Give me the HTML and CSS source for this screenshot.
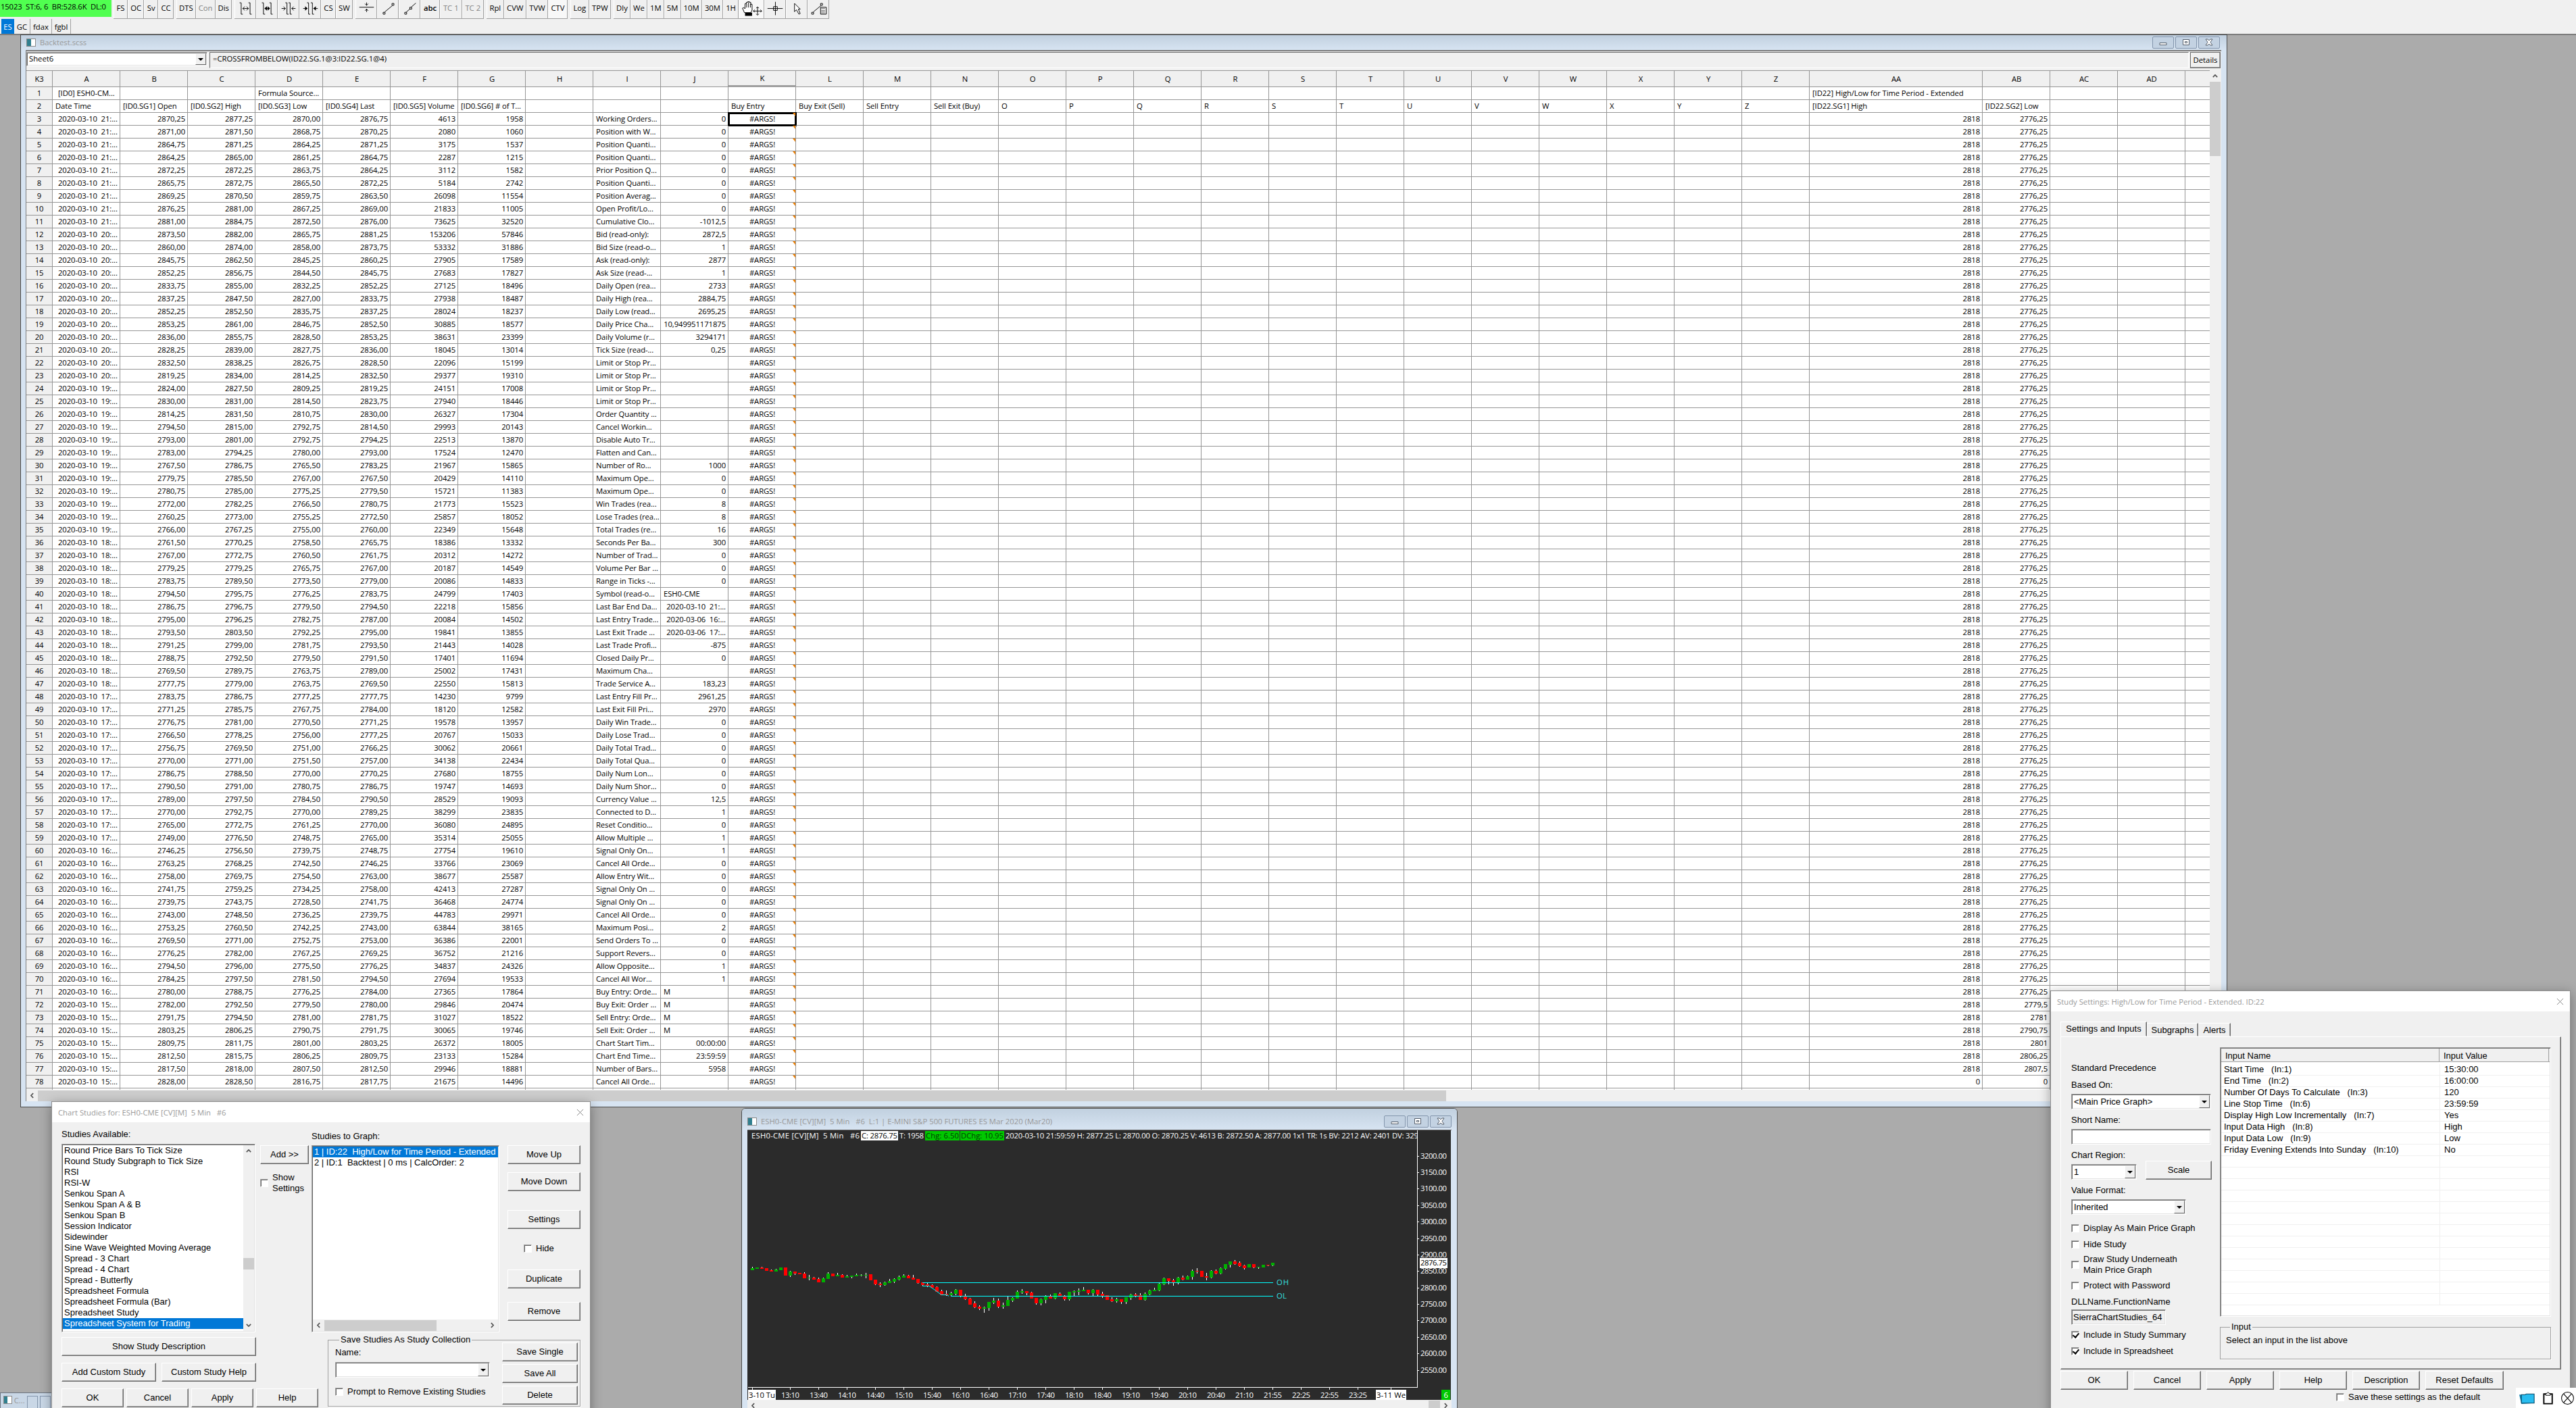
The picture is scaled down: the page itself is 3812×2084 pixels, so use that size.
FILE: index.html
```html
<!DOCTYPE html>
<html>
<head>
    <meta charset="utf-8">
    <title>Sierra Chart</title>
    <link rel="stylesheet" href="styles.css">
</head>
<body>
    <div class="toolbar">
        <div class="status">15023&nbsp; ST:6, 6&nbsp; BR:528.6K&nbsp; DL:0</div>
        <div class="group g1"><span>FS</span><span>OC</span><span>Sv</span><span>CC</span></div>
        <div class="group g2"><span>DTS</span><span class="off">Con</span><span>Dis</span></div>
        <div class="group g3">
            <span class="ico"><svg viewBox="0 0 32 27"><path d="M7 3.500h2.500v18h2.500M21 3.500h2.500v18h2.500M12 12.500h9M15 9.500l-3 3l3 3M18 9.500l3 3l-3 3"/></svg></span>
            <span class="ico"><svg viewBox="0 0 32 27"><path d="M8 3.500h2.500v18h2.500M20 3.500h2.500v18h2.500M13 12.500h7"/><path class="fill" d="M16 9v7l-4-3.500zM17 9v7l4-3.500z"/></svg></span>
            <span class="ico"><svg viewBox="0 0 32 27"><path d="M11 3.500h2.500v18h2.500M16 3.500h2.500v18h2.500M5 12.500h6M8 9.500l3 3l-3 3M21 12.500h6M24 9.500l-3 3l3 3"/></svg></span>
            <span class="ico"><svg viewBox="0 0 32 27"><path d="M11 3.500h2.500v18h2.500M17 3.500h2.500v18h2.500M5 12.500h6M21 12.500h7"/><path class="fill" d="M8 9v7l4-3.500zM25 9v7l-4-3.500z"/></svg></span>
            <span>CS</span><span>SW</span>
        </div>
        <div class="group g4">
            <span class="ico"><svg viewBox="0 0 32 27"><path d="M5 10.500h23M16.500 3v5M14 5l2.500 2.500l2.500-2.500M16.500 18v-5M14 16l2.500-2.500l2.500 2.500"/></svg></span>
            <span class="ico"><svg viewBox="0 0 32 27"><path d="M8.500 18.500h3v3h-3zM22.500 4.500h3v3h-3zM11 18L23 8"/></svg></span>
            <span class="ico"><svg viewBox="0 0 32 27"><path d="M8.500 18.500h3v3h-3zM16.500 10.500h3v3h-3zM11 18l6-5M19 10l7-6"/></svg></span>
            <span class="abc">abc</span><span class="off">TC 1</span><span class="off">TC 2</span>
        </div>
        <div class="group g5"><span>Rpl</span><span>CVW</span><span>TVW</span><span class="on">CTV</span></div>
        <div class="group g6"><span>Log</span><span>TPW</span></div>
        <div class="group g7">
            <span>Dly</span><span>We</span><span>1M</span><span>5M</span><span>10M</span><span>30M</span><span>1H</span>
            <span class="ico hand on"><svg viewBox="0 0 38 27"><path class="white" d="M8 19l-3-7l2-1l2 2V5h2V3h2V2h3v1h2v3h2v9l-2 4z"/><path d="M11.500 5v6M14.500 3v8M17.500 5v6M28.500 10v12M22 16.500h13M26.500 12l2-2l2 2M26.500 21l2 2l2-2M24 14.500l-2 2l2 2M33 14.500l2 2l-2 2"/><path class="fill" d="M9 19h11v5H9z"/></svg></span>
            <span class="ico"><svg viewBox="0 0 32 27"><path d="M4 12.500h24M16.500 2v21M13.500 9.500h6v6h-6z"/></svg></span>
            <span class="ico"><svg viewBox="0 0 32 27"><path class="white" d="M12.500 4.500v13l3-3l4 7l2-1l-3-7h3z"/></svg></span>
            <span class="ico"><svg viewBox="0 0 32 27"><path d="M5.500 18.500h3v3h-3zM19.500 4.500h3v3h-3zM8 18L20 8M19.500 10.500h9v11h-9z"/><path d="M21 12.500h6M21 15.500h6M21 17.500h6M21 19.500h6" stroke-dasharray="1 1"/></svg></span>
        </div>
    </div>
    <div class="tabs"><span class="active">ES</span><span>GC</span><span>fdax</span><span>fgbl</span></div>

    <div class="desktop">
        <!-- spreadsheet -->
        <div class="window sheet-window">
            <div class="caption">
                <i class="app-icon"></i><span class="caption-text">Backtest.scss</span>
                <b class="win-btn"><svg viewBox="0 0 12 12"><path d="M1 6.500h10v3H1z"/></svg></b>
                <b class="win-btn"><svg viewBox="0 0 12 12"><path d="M1.500 1.500h9v8h-9zM4.500 4.500h3v2h-3z"/></svg></b>
                <b class="win-btn"><svg viewBox="0 0 12 12"><path d="M1 1h3l2 2l2-2h3L8 5.500L11 10H8L6 8l-2 2H1l3-4.500z"/></svg></b>
            </div>
            <div class="sheet-client">
                <div class="sheet-bar">
                    <div class="combo sheet-name">Sheet6<i></i></div>
                    <div class="formula">=CROSSFROMBELOW(ID22.SG.1@3:ID22.SG.1@4)</div>
                    <div class="btn details">Details</div>
                </div>
                <div class="sheet-body">
                    <div class="sheet-view"><table id="sheet"></table></div>
                    <div class="vscroll"><svg viewBox="0 0 10 6"><path d="M1 5l4-4l4 4"/></svg><b></b></div>
                </div>
                <div class="hscroll"><svg viewBox="0 0 6 10"><path d="M5 1L1 5l4 4"/></svg><b></b></div>
            </div>
        </div>

        <!-- chart -->
        <div class="window chart-window">
            <div class="caption">
                <i class="app-icon"></i><span class="caption-text">ESH0-CME [CV][M]&nbsp; 5 Min&nbsp;&nbsp; #6&nbsp; L:1 | E-MINI S&amp;P 500 FUTURES ES Mar 2020 (Mar20)</span>
                <b class="win-btn"><svg viewBox="0 0 12 12"><path d="M1 6.500h10v3H1z"/></svg></b>
                <b class="win-btn"><svg viewBox="0 0 12 12"><path d="M1.500 1.500h9v8h-9zM4.500 4.500h3v2h-3z"/></svg></b>
                <b class="win-btn"><svg viewBox="0 0 12 12"><path d="M1 1h3l2 2l2-2h3L8 5.500L11 10H8L6 8l-2 2H1l3-4.500z"/></svg></b>
            </div>
            <div class="chart-client">
                <svg id="chart" viewBox="1106 1673 1041 399"></svg>
                <div class="hscroll"><svg viewBox="0 0 6 10"><path d="M5 1L1 5l4 4"/></svg><b></b><svg viewBox="0 0 6 10"><path d="M1 1l4 4l-4 4"/></svg></div>
            </div>
        </div>

        <!-- minimized window -->
        <div class="mini"><i class="app-icon"></i><span>C...</span><b></b><b></b></div>
    </div>

    <!-- Chart Studies dialog -->
    <div class="dialog studies">
        <div class="dialog-title"><span>Chart Studies for: ESH0-CME [CV][M]&nbsp; 5 Min&nbsp;&nbsp; #6</span><svg class="close" viewBox="0 0 12 12"><path d="M1 1l10 10M11 1L1 11"/></svg></div>
        <div class="studies-top">
            <div class="col-available">
                <label>Studies Available:</label>
                <div class="list available">
                    <ul>
                        <li>Round Price Bars To Tick Size</li>
                        <li>Round Study Subgraph to Tick Size</li>
                        <li>RSI</li>
                        <li>RSI-W</li>
                        <li>Senkou Span A</li>
                        <li>Senkou Span A &amp; B</li>
                        <li>Senkou Span B</li>
                        <li>Session Indicator</li>
                        <li>Sidewinder</li>
                        <li>Sine Wave Weighted Moving Average</li>
                        <li>Spread - 3 Chart</li>
                        <li>Spread - 4 Chart</li>
                        <li>Spread - Butterfly</li>
                        <li>Spreadsheet Formula</li>
                        <li>Spreadsheet Formula (Bar)</li>
                        <li>Spreadsheet Study</li>
                        <li class="selected">Spreadsheet System for Trading</li>
                        <li>Spreadsheet System/Alert</li>
                    </ul>
                    <div class="vscroll"><svg viewBox="0 0 10 6"><path d="M1 5l4-4l4 4"/></svg><b></b><svg viewBox="0 0 10 6"><path d="M1 1l4 4l4-4"/></svg></div>
                </div>
            </div>
            <div class="col-add">
                <div class="btn">Add &gt;&gt;</div>
                <div class="check"><i></i><span>Show<br>Settings</span></div>
            </div>
            <div class="col-graph">
                <label>Studies to Graph:</label>
                <div class="list graph">
                    <ul>
                        <li class="selected">1 | ID:22&nbsp; High/Low for Time Period - Extended</li>
                        <li>2 | ID:1&nbsp; Backtest | 0 ms | CalcOrder: 2</li>
                    </ul>
                    <div class="hscroll"><svg viewBox="0 0 6 10"><path d="M5 1L1 5l4 4"/></svg><b></b><svg viewBox="0 0 6 10"><path d="M1 1l4 4l-4 4"/></svg></div>
                </div>
            </div>
            <div class="col-actions">
                <div class="btn">Move Up</div>
                <div class="btn down">Move Down</div>
                <div class="btn settings">Settings</div>
                <div class="check"><i></i><span>Hide</span></div>
                <div class="btn duplicate">Duplicate</div>
                <div class="btn remove">Remove</div>
            </div>
        </div>
        <div class="studies-bottom">
            <div class="bottom-buttons">
                <div class="btn describe">Show Study Description</div>
                <div class="pair"><div class="btn">Add Custom Study</div><div class="btn">Custom Study Help</div></div>
                <div class="four"><div class="btn">OK</div><div class="btn">Cancel</div><div class="btn">Apply</div><div class="btn">Help</div></div>
            </div>
            <fieldset class="collection">
                <legend>Save Studies As Study Collection</legend>
                <div class="collection-form">
                    <label>Name:</label>
                    <div class="combo"><i></i></div>
                    <div class="check"><i></i><span>Prompt to Remove Existing Studies</span></div>
                </div>
                <div class="collection-buttons"><div class="btn">Save Single</div><div class="btn">Save All</div><div class="btn">Delete</div></div>
            </fieldset>
        </div>
    </div>

    <!-- Study Settings dialog -->
    <div class="dialog study">
        <div class="dialog-title"><span>Study Settings: High/Low for Time Period - Extended. ID:22</span><svg class="close" viewBox="0 0 12 12"><path d="M1 1l10 10M11 1L1 11"/></svg></div>
        <div class="tab-row"><span class="tab active">Settings and Inputs</span><span class="tab sub">Subgraphs</span><span class="tab alerts">Alerts</span></div>
        <div class="panel">
            <div class="options">
                <label>Standard Precedence</label>
                <label class="based">Based On:</label>
                <div class="combo wide">&lt;Main Price Graph&gt;<i></i></div>
                <label>Short Name:</label>
                <div class="field wide"></div>
                <label>Chart Region:</label>
                <div class="region"><div class="combo">1<i></i></div><div class="btn">Scale</div></div>
                <label>Value Format:</label>
                <div class="combo format">Inherited<i></i></div>
                <div class="check"><i></i><span>Display As Main Price Graph</span></div>
                <div class="check hide-study"><i></i><span>Hide Study</span></div>
                <div class="check two"><i></i><span>Draw Study Underneath<br>Main Price Graph</span></div>
                <div class="check"><i></i><span>Protect with Password</span></div>
                <label class="dll">DLLName.FunctionName</label>
                <div class="field dll-name">SierraChartStudies_64</div>
                <div class="check"><i class="ticked"></i><span>Include in Study Summary</span></div>
                <div class="check"><i class="ticked"></i><span>Include in Spreadsheet</span></div>
            </div>
            <div class="inputs">
                <div class="list input-list">
                    <div class="input-head"><span>Input Name</span><span>Input Value</span></div>
                    <div id="inputs"></div>
                </div>
                <fieldset class="input-box"><legend>Input</legend>Select an input in the list above</fieldset>
            </div>
        </div>
        <div class="study-buttons">
            <div class="btn">OK</div><div class="btn">Cancel</div><div class="btn">Apply</div><div class="btn">Help</div><div class="btn">Description</div><div class="btn reset">Reset Defaults</div>
        </div>
        <div class="check save-default"><i></i><span>Save these settings as the default</span></div>
    </div>

    <div class="tray">
        <svg viewBox="0 0 24 20"><path d="M1 5h7l2 2h12v10l-18 1z" fill="#0b7fae"/><path d="M4 5h5l2-1h11v13H4z" fill="#29bdf0" stroke="#0a4a66"/></svg>
        <svg viewBox="0 0 18 22"><path d="M2.500 4.500h13v15h-13z" fill="#fff" stroke="#000" stroke-width="2"/><path d="M5.500 3.500h2l1.500-2l1.500 2h2v3h-7z" fill="#fff" stroke="#000"/></svg>
        <svg viewBox="0 0 20 20"><circle cx="10" cy="10" r="8.500" fill="none" stroke="#000"/><path d="M4.500 4l11 12M15.500 4l-11 12" stroke="#000"/></svg>
    </div>
    <script src="script.js"></script>
</body>
</html>
```

FILE: styles.css
```css
* {
    box-sizing: border-box;
}

html {
    height: 2084px;
    overflow: hidden;
}

body {
    margin: 0;
    width: 3812px;
    height: 2084px;
    overflow: hidden;
    position: relative;
    background: #f0f0f0;
    color: #000;
    font: 11.3px/14px "Open Sans", "Noto Sans", sans-serif;
    white-space: nowrap;
}

/* toolbar */
.toolbar {
    display: flex;
    gap: 4px;
    height: 28px;
    line-height: 23px;
}

.status {
    width: 165px;
    height: 25px;
    margin-right: -1px;
    padding-left: 1px;
    background: #50ff50;
    line-height: 20px;
    letter-spacing: -0.15px;
    white-space: pre;
    overflow: hidden;
}

.group {
    display: flex;
    border-bottom: 1px solid #a0a0a0;
}

.group span {
    flex: 1 1 auto;
    text-align: center;
    border-right: 1px solid #a0a0a0;
    border-left: 1px solid #fff;
}

.group .ico {
    flex: 0 0 32px;
}

.group .hand {
    flex-basis: 38px;
}

.group .off {
    color: #838383;
}

.group .on {
    background: #f8f8f8;
}

.group .abc {
    font-weight: 600;
}

.g1 { width: 89px; }
.g2 { width: 82px; }
.g3 { width: 175px; }
.g4 { width: 190px; }
.g5 { width: 120px; }
.g6 { width: 60px; }
.g7 { width: 319px; }

.ico svg {
    display: block;
    width: 100%;
    height: 27px;
    fill: none;
    stroke: #000;
}

.ico .fill {
    fill: #000;
    stroke: none;
}

.ico .white {
    fill: #fff;
}

.tabs {
    display: flex;
    height: 24px;
    padding-left: 2px;
    line-height: 23px;
    border-bottom: 2px solid #7c7c7c;
}

.tabs span {
    width: 32px;
    text-align: center;
    border-right: 1px solid #a0a0a0;
}

.tabs span:nth-child(2) {
    width: 24px;
}

.tabs span:last-child {
    width: 28px;
}

.tabs .active {
    width: 19px;
    background: #0078d7;
    color: #fff;
    border-right: none;
}

/* MDI area */
.desktop {
    height: 2032px;
    background: #ababab;
}

.window {
    position: absolute;
    display: flex;
    flex-direction: column;
    background: #d7e4f2;
    border: 1px solid #4a4a4a;
}

.sheet-window {
    left: 30px;
    top: 51px;
    width: 3266px;
    height: 1588px;
    padding: 0 8px 8px 7px;
}

.chart-window {
    left: 1097px;
    top: 1640px;
    width: 1060px;
    height: 460px;
    padding: 0 8px;
    border-radius: 6px 6px 0 0;
}

.caption {
    display: flex;
    align-items: center;
    height: 22px;
    margin: 0 -8px 0 -7px;
    padding: 0 10px 0 8px;
    gap: 2px;
    background: linear-gradient(#c1d0df, #d7e4f2);
    color: #999;
}

.chart-window .caption {
    height: 31px;
    margin: 0 -8px;
    padding: 6px 8px 0;
    border-radius: 5px 5px 0 0;
}

.caption-text {
    flex: 1;
    padding-left: 4px;
}

.app-icon {
    width: 14px;
    height: 12px;
    border: 1px solid #8a8a8a;
    background: linear-gradient(90deg, #2f7f8f 50%, #fff 50%);
}

.win-btn {
    width: 32px;
    height: 18px;
    border: 1px solid #8496ad;
    border-radius: 2px;
    background: #c3d2e2;
    text-align: center;
}

.win-btn svg {
    width: 12px;
    height: 12px;
    display: block;
    margin: 2px auto;
    fill: #fff;
    stroke: #555e6b;
}

.sheet-client {
    flex: 1;
    display: flex;
    flex-direction: column;
    background: #f0f0f0;
    border-top: 2px solid #7c7c7c;
    border-left: 1px solid #7c7c7c;
}

.sheet-bar {
    display: flex;
    height: 28px;
    padding-top: 1px;
}

.sheet-name {
    width: 268px;
    height: 21px;
    margin-right: 3px;
}

.formula {
    flex: 1;
    height: 24px;
    padding: 2px 4px;
    border: 1px solid;
    border-color: #696969 #fff #fff #696969;
}

.sheet-bar .details {
    width: 45px;
    height: 24px;
    margin: 0 1px 0 2px;
    line-height: 21px;
    border-color: #696969;
}

.sheet-body {
    display: flex;
    height: 1509px;
}

.sheet-view {
    width: 3231px;
    overflow: hidden;
    background: #fff;
    border-top: 1px solid #969696;
}

#sheet {
    border-collapse: separate;
    border-spacing: 0;
    table-layout: fixed;
    width: 3295px;
}

#sheet td {
    height: 19px;
    padding: 0 3px 0 4px;
    border-right: 1px solid #969696;
    border-bottom: 1px solid #969696;
    line-height: 18px;
    overflow: hidden;
    position: relative;
    letter-spacing: -0.1px;
}

#sheet .num {
    text-align: right;
}

#sheet .date {
    padding-left: 8px;
}

#sheet .head td {
    height: 24px;
    background: #f0f0f0;
    text-align: center;
}

#sheet td:first-child {
    background: #f0f0f0;
    text-align: center;
    padding: 0;
}

#sheet .head .current {
    border-bottom: 3px solid #a0a0a0;
}

#sheet .args {
    text-align: center;
}

/* comment marker in the cell corner */
#sheet .args::after {
    content: "";
    position: absolute;
    top: 0;
    right: 0;
    border-top: 5px solid #f08000;
    border-left: 4px solid transparent;
}

#sheet .cursor {
    outline: 3px solid #000;
    outline-offset: -2px;
}

/* scrollbars */
.vscroll {
    width: 16px;
    display: flex;
    flex-direction: column;
    align-items: center;
    background: #f0f0f0;
}

.vscroll svg {
    width: 8px;
    height: 5px;
    margin: 6px 0;
    fill: none;
    stroke: #505050;
    stroke-width: 2;
}

.vscroll b {
    width: 16px;
    height: 110px;
    background: #cdcdcd;
}

.hscroll {
    height: 17px;
    display: flex;
    align-items: center;
    background: #f0f0f0;
}

.hscroll svg {
    width: 5px;
    height: 9px;
    margin: 0 6px;
    fill: none;
    stroke: #505050;
    stroke-width: 2;
}

.hscroll b {
    height: 16px;
    background: #cdcdcd;
}

.sheet-client .hscroll b {
    width: 2084px;
}

/* chart window */
.chart-client {
    flex: 1;
    border-top: 1px solid #696969;
}

#chart {
    display: block;
    width: 1041px;
    height: 399px;
    background: #2b2b2b;
    fill: #fff;
}

.chart-client .hscroll b {
    width: 17px;
    margin-left: auto;
}

.mini {
    position: absolute;
    left: 0;
    top: 2061px;
    width: 80px;
    height: 30px;
    display: flex;
    padding: 4px;
    gap: 3px;
    background: #c9d7e6;
    border: 1px solid #6b7480;
    color: #999;
}

.mini b {
    width: 18px;
    border: 1px solid #8496ad;
}

/* dialogs */
.dialog {
    position: absolute;
    background: #f0f0f0;
    border: 1px solid #8e8e8e;
    box-shadow: 0 4px 16px rgba(0, 0, 0, 0.35);
    font: 13px/16px "Liberation Sans", Arial, sans-serif;
}

.dialog-title {
    display: flex;
    justify-content: space-between;
    align-items: center;
    height: 30px;
    padding: 0 9px;
    background: #fff;
    color: #999;
    font: 11.3px "Open Sans", "Noto Sans", sans-serif;
}

.close {
    width: 11px;
    height: 11px;
    stroke: #808080;
}

.dialog label {
    display: block;
    height: 16px;
}

.btn {
    height: 28px;
    line-height: 25px;
    text-align: center;
    background: #f0f0f0;
    border: 1px solid;
    border-color: #fff #696969 #696969 #fff;
    box-shadow: inset -1px -1px #a0a0a0;
}

.combo,
.field,
.list {
    background: #fff;
    border: 1px solid;
    border-color: #a0a0a0 #fff #fff #a0a0a0;
    box-shadow: inset 1px 1px #696969, inset -1px -1px #e3e3e3;
}

.combo,
.field {
    height: 23px;
    padding-left: 3px;
    line-height: 21px;
}

.combo {
    display: flex;
    justify-content: space-between;
}

.combo.sheet-name {
    height: 21px;
    line-height: 18px;
}

.combo i {
    width: 16px;
    margin: 1px 1px 1px auto;
    background: #f0f0f0;
    border: 1px solid;
    border-color: #fff #696969 #696969 #fff;
    display: flex;
    align-items: center;
    justify-content: center;
}

.combo i::after {
    content: "";
    border: 4px solid transparent;
    border-top-color: #000;
    border-bottom: none;
}

.check {
    display: flex;
    align-items: center;
    gap: 6px;
}

.check i {
    width: 12px;
    height: 12px;
    background: #fff;
    border: 1px solid;
    border-color: #a0a0a0 #fff #fff #a0a0a0;
    box-shadow: inset 1px 1px #696969;
}

.check .ticked::after {
    content: "";
    display: block;
    width: 4px;
    height: 7px;
    margin: 0 0 0 3px;
    border: solid #000;
    border-width: 0 2px 2px 0;
    transform: rotate(40deg);
}

.list ul {
    list-style: none;
    margin: 0;
    padding: 0;
    overflow: hidden;
    flex: 1;
}

.list li {
    height: 16px;
    padding-left: 2px;
}

.list .selected {
    background: #0078d7;
    color: #fff;
}

fieldset {
    margin: 0;
    padding: 0;
    border: 1px solid #a0a0a0;
    box-shadow: 1px 1px #fff;
}

legend {
    margin-left: 6px;
    padding: 0 2px;
}

/* Chart Studies */
.studies {
    left: 76px;
    top: 1630px;
    width: 798px;
    height: 480px;
}

.studies-top {
    display: flex;
    height: 318px;
    padding-left: 14px;
}

.col-available {
    width: 287px;
    margin-right: 7px;
    padding-top: 10px;
}

.available {
    display: flex;
    height: 279px;
    margin-top: 6px;
    padding: 1px;
}

.available .vscroll b {
    height: 17px;
    margin-top: 150px;
}

.available .vscroll svg:last-child {
    margin-top: auto;
}

.col-add {
    width: 72px;
    margin-right: 4px;
    padding-top: 34px;
}

.col-add .check {
    margin-top: 12px;
}

.col-graph {
    width: 278px;
    margin-right: 12px;
    padding-top: 13px;
}

.graph {
    display: flex;
    flex-direction: column;
    height: 277px;
    margin-top: 5px;
    padding: 1px;
}

.graph .hscroll b {
    width: 166px;
    margin-right: auto;
}

.col-actions {
    width: 108px;
    padding-top: 34px;
}

.down { margin-top: 12px; }
.settings { margin-top: 28px; }
.col-actions .check { margin: 21px 0 0 24px; }
.duplicate { margin-top: 23px; }
.remove { margin-top: 20px; }

.studies-bottom {
    display: flex;
    padding-left: 14px;
}

.bottom-buttons {
    width: 394px;
}

.describe {
    width: 288px;
}

.pair {
    display: flex;
    gap: 8px;
    width: 288px;
    margin: 10px 0;
}

.four {
    display: flex;
    gap: 4px;
    width: 380px;
}

.pair .btn,
.four .btn {
    flex: 1;
}

.collection {
    display: flex;
    justify-content: space-between;
    width: 374px;
    height: 107px;
    margin-top: -4px;
    padding: 0 3px 0 10px;
}

.collection-form {
    width: 229px;
    padding-top: 3px;
}

.collection .combo {
    margin: 6px 0 13px;
}

.collection-buttons {
    width: 112px;
    margin-top: -4px;
}

.collection-buttons .btn {
    margin-bottom: 4px;
}

/* Study Settings */
.study {
    left: 3034px;
    top: 1466px;
    width: 770px;
    height: 640px;
}

.tab-row {
    display: flex;
    align-items: flex-end;
    height: 37px;
    padding-left: 14px;
}

.tab {
    height: 20px;
    line-height: 20px;
    text-align: center;
    border: 1px solid;
    border-color: #fff #696969 transparent #fff;
    box-shadow: inset -1px 0 #a0a0a0;
}

.tab.active {
    width: 128px;
    height: 22px;
    line-height: 19px;
}

.tab.sub { width: 76px; }
.tab.alerts { width: 48px; }

.panel {
    display: flex;
    width: 741px;
    height: 493px;
    margin-left: 14px;
    border: 1px solid;
    border-color: #fff #696969 #696969 #fff;
    box-shadow: inset -1px -1px #a0a0a0;
}

.options {
    width: 235px;
    padding: 38px 0 0 15px;
}

.options .based {
    margin: 9px 0 5px;
}

.options .wide {
    width: 207px;
    margin-bottom: 8px;
}

.options .wide + label {
    margin-bottom: 5px;
}

.options .region {
    display: flex;
    align-items: flex-end;
    gap: 13px;
    margin: -5px 0 8px;
}

.region .combo { width: 97px; }
.region .btn { width: 98px; }

.format {
    width: 170px;
    margin: 5px 0 12px;
}

.options .check {
    margin-bottom: 8px;
}

.options .hide-study {
    margin-bottom: 6px;
}

.options .two {
    margin-bottom: 7px;
}

.options .dll-name {
    width: 140px;
    margin: 3px 0 7px;
    background: #f0f0f0;
    padding-left: 2px;
}

.input-list {
    width: 490px;
    height: 399px;
    margin-top: 15px;
    padding: 1px;
}

.input-head {
    display: flex;
    height: 20px;
    background: #f0f0f0;
    line-height: 22px;
    border-bottom: 1px solid #a0a0a0;
    margin-bottom: 3px;
}

.input-head span {
    width: 323px;
    padding-left: 6px;
    border-right: 1px solid #a0a0a0;
}

.input-head span:last-child {
    width: 162px;
}

.input-row {
    display: flex;
    height: 17px;
    border-bottom: 1px solid #f0f0f0;
    white-space: pre;
}

.input-row span:first-child {
    width: 324px;
    padding-left: 4px;
    border-right: 1px solid #f0f0f0;
}

.input-row span:last-child {
    padding-left: 6px;
}

.input-box {
    height: 56px;
    margin-top: 7px;
    padding: 4px 0 0 8px;
}

.study-buttons {
    display: flex;
    gap: 8px;
    margin: 2px 0 3px 14px;
}

.study-buttons .btn {
    width: 100px;
}

.study-buttons .reset {
    width: 116px;
}

.save-default {
    margin-left: 422px;
}

.tray {
    position: absolute;
    left: 3723px;
    top: 2054px;
    width: 89px;
    height: 30px;
    display: flex;
    align-items: center;
    gap: 10px;
    padding-left: 4px;
    background: #fff;
}

.tray svg {
    height: 21px;
    flex: none;
}
```

FILE: script.js
```javascript
// open high low last volume trades, newest bar first
const bars = `2870,25 2877,25 2870,00 2876,75 4613 1958
2871,00 2871,50 2868,75 2870,25 2080 1060
2864,75 2871,25 2864,25 2871,25 3175 1537
2864,25 2865,00 2861,25 2864,75 2287 1215
2872,25 2872,25 2863,75 2864,25 3112 1582
2865,75 2872,75 2865,50 2872,25 5184 2742
2869,25 2870,50 2859,75 2863,50 26098 11554
2876,25 2881,00 2867,25 2869,00 21833 11005
2881,00 2884,75 2872,50 2876,00 73625 32520
2873,50 2882,00 2865,75 2881,25 153206 57846
2860,00 2874,00 2858,00 2873,75 53332 31886
2845,75 2862,50 2845,25 2860,25 27905 17589
2852,25 2856,75 2844,50 2845,75 27683 17827
2833,75 2855,00 2832,25 2852,25 27125 18496
2837,25 2847,50 2827,00 2833,75 27938 18487
2852,25 2852,50 2835,75 2837,25 28024 18237
2853,25 2861,00 2846,75 2852,50 30885 18577
2836,00 2855,75 2828,50 2853,25 38631 23399
2828,25 2839,00 2827,75 2836,00 18045 13014
2832,50 2838,25 2826,75 2828,50 22096 15199
2819,25 2834,00 2814,25 2832,50 29377 19310
2824,00 2827,50 2809,25 2819,25 24151 17008
2830,00 2831,00 2814,50 2823,75 27940 18446
2814,25 2831,50 2810,75 2830,00 26327 17304
2794,50 2815,00 2792,75 2814,50 29993 20143
2793,00 2801,00 2792,75 2794,25 22513 13870
2783,00 2794,25 2780,00 2793,00 17524 12470
2767,50 2786,75 2765,50 2783,25 21967 15865
2779,75 2785,50 2767,00 2767,50 20429 14110
2780,75 2785,00 2775,25 2779,50 15721 11383
2772,00 2782,25 2766,50 2780,75 21773 15523
2760,25 2773,00 2755,25 2772,50 25857 18052
2766,00 2767,25 2755,00 2760,00 22349 15648
2761,50 2770,25 2758,50 2765,75 18386 13332
2767,00 2772,75 2760,50 2761,75 20312 14272
2779,25 2779,25 2765,75 2767,00 20187 14549
2783,75 2789,50 2773,50 2779,00 20086 14833
2794,50 2795,75 2776,25 2783,75 24799 17403
2786,75 2796,75 2779,50 2794,50 22218 15856
2795,00 2796,25 2782,75 2787,00 20084 14502
2793,50 2803,50 2792,25 2795,00 19841 13855
2791,25 2799,00 2781,75 2793,50 21443 14028
2788,75 2792,50 2779,50 2791,50 17401 11694
2769,50 2789,75 2763,75 2789,00 25002 17431
2777,75 2779,00 2763,75 2769,50 22550 15813
2783,75 2786,75 2777,25 2777,75 14230 9799
2771,25 2785,75 2767,75 2784,00 18120 12582
2776,75 2781,00 2770,50 2771,25 19578 13957
2766,50 2778,25 2756,00 2777,25 20767 15033
2756,75 2769,50 2751,00 2766,25 30062 20661
2770,00 2771,00 2751,50 2757,00 34138 22434
2786,75 2788,50 2770,00 2770,25 27680 18755
2790,50 2791,00 2780,75 2786,75 19747 14693
2789,00 2797,50 2784,50 2790,50 28529 19093
2770,00 2792,75 2770,00 2789,25 38299 23835
2765,00 2772,75 2761,25 2770,00 36080 24895
2749,00 2776,50 2748,75 2765,00 35314 25055
2746,25 2756,50 2739,75 2748,75 27754 19610
2763,25 2768,25 2742,50 2746,25 33766 23069
2758,00 2769,75 2754,50 2763,00 38677 25587
2741,75 2759,25 2734,25 2758,00 42413 27287
2739,75 2743,75 2728,50 2741,75 36468 24774
2743,00 2748,50 2736,25 2739,75 44783 29971
2753,25 2760,50 2742,25 2743,00 63844 38165
2769,50 2771,00 2752,75 2753,00 36386 22001
2776,25 2782,00 2767,25 2769,25 36752 21216
2794,50 2796,00 2775,50 2776,25 34837 24326
2784,25 2797,50 2781,50 2794,50 27694 19533
2780,00 2788,75 2776,25 2784,00 27365 17864
2782,00 2792,50 2779,50 2780,00 29846 20474
2791,75 2794,50 2781,00 2781,75 31027 18522
2803,25 2806,25 2790,75 2791,75 30065 19746
2809,75 2811,75 2801,00 2803,25 26372 18005
2812,50 2815,75 2806,25 2809,75 23133 15284
2817,50 2818,00 2807,50 2812,50 29946 18881
2828,00 2828,50 2816,75 2817,75 21675 14496`.split('\n').map(l => l.split(' '));

// columns I and J
const info = `Working Orders...|0
Position with W...|0
Position Quanti...|0
Position Quanti...|0
Prior Position Q...|0
Position Quanti...|0
Position Averag...|0
Open Profit/Lo...|0
Cumulative Clo...|-1012,5
Bid (read-only):|2872,5
Bid Size (read-o...|1
Ask (read-only):|2877
Ask Size (read-...|1
Daily Open (rea...|2733
Daily High (rea...|2884,75
Daily Low (read...|2695,25
Daily Price Cha...|10,949951171875
Daily Volume (r...|3294171
Tick Size (read-...|0,25
Limit or Stop Pr...|
Limit or Stop Pr...|
Limit or Stop Pr...|
Limit or Stop Pr...|
Order Quantity ...|
Cancel Workin...|
Disable Auto Tr...|
Flatten and Can...|
Number of Ro...|1000
Maximum Ope...|0
Maximum Ope...|0
Win Trades (rea...|8
Lose Trades (rea...|8
Total Trades (re...|16
Seconds Per Ba...|300
Number of Trad...|0
Volume Per Bar ...|0
Range in Ticks -...|0
Symbol (read-o...|ESH0-CME
Last Bar End Da...|2020-03-10  21:...
Last Entry Trade...|2020-03-06  16:...
Last Exit Trade ...|2020-03-06  17:...
Last Trade Profi...|-875
Closed Daily Pr...|0
Maximum Cha...|
Trade Service A...|183,23
Last Entry Fill Pr...|2961,25
Last Exit Fill Pri...|2970
Daily Win Trade...|0
Daily Lose Trad...|0
Daily Total Trad...|0
Daily Total Qua...|0
Daily Num Lon...|0
Daily Num Shor...|0
Currency Value ...|12,5
Connected to D...|1
Reset Conditio...|0
Allow Multiple ...|1
Signal Only On...|1
Cancel All Orde...|0
Allow Entry Wit...|0
Signal Only On ...|0
Signal Only On ...|0
Cancel All Orde...|0
Maximum Posi...|2
Send Orders To ...|0
Support Revers...|0
Allow Opposite...|1
Cancel All Wor...|1
Buy Entry: Orde...|M
Buy Exit: Order ...|M
Sell Entry: Orde...|M
Sell Exit: Order ...|M
Chart Start Tim...|00:00:00
Chart End Time...|23:59:59
Number of Bars...|5958
Cancel All Orde...|`.split('\n').map(l => l.split('|'));

const lows = { 72: '2779,5', 73: '2781', 74: '2790,75', 75: '2801', 76: '2806,25', 77: '2807,5', 78: '0' };

function hourOf(row) {
    if (row < 12) return 21;
    return 20 - Math.floor((row - 12) / 12);
}

function cell(text, cls) {
    return '<td class="' + (cls || '') + '">' + (text || '').replace(/ {2}/g, ' &nbsp;') + '</td>';
}

function buildSheet() {
    const letters = [];
    for (let i = 0; i < 31; i++) {
        letters.push(i < 26 ? String.fromCharCode(65 + i) : 'A' + String.fromCharCode(39 + i));
    }
    let html = '<colgroup><col style="width:39px">';
    letters.forEach(l => { html += '<col style="width:' + (l === 'AA' ? 256 : 100) + 'px">'; });
    html += '</colgroup><tr class="head">' + cell('K3');
    letters.forEach(l => { html += cell(l === 'AE' ? '' : l, l === 'K' ? 'current' : ''); });
    html += '</tr>';

    const titles = {
        1: { A: '[ID0] ESH0-CM...', D: 'Formula Source...', AA: '[ID22] High/Low for Time Period - Extended' },
        2: {
            A: 'Date Time', B: '[ID0.SG1] Open', C: '[ID0.SG2] High', D: '[ID0.SG3] Low', E: '[ID0.SG4] Last',
            F: '[ID0.SG5] Volume', G: '[ID0.SG6] # of T...', K: 'Buy Entry', L: 'Buy Exit (Sell)', M: 'Sell Entry',
            N: 'Sell Exit (Buy)', O: 'O', P: 'P', Q: 'Q', R: 'R', S: 'S', T: 'T', U: 'U', V: 'V', W: 'W', X: 'X',
            Y: 'Y', Z: 'Z', AA: '[ID22.SG1] High', AB: '[ID22.SG2] Low'
        }
    };

    for (let row = 1; row <= 79; row++) {
        html += '<tr>' + cell(row < 79 ? String(row) : '');
        letters.forEach((l, i) => {
            if (row === 79) { html += cell(); return; }
            if (row < 3) { html += cell(titles[row][l], row === 1 && l === 'A' ? 'date' : ''); return; }
            const n = row - 3;
            if (l === 'A') html += cell('2020-03-10  ' + hourOf(row) + ':...', 'date');
            else if (i < 7) html += cell(bars[n][i - 1], 'num');
            else if (l === 'I') html += cell(info[n][0]);
            else if (l === 'J') html += cell(info[n][1], /^(M|ESH)/.test(info[n][1]) ? '' : 'num');
            else if (l === 'K') html += cell('#ARGS!', row === 3 ? 'args cursor' : 'args');
            else if (l === 'AA') html += cell(row === 78 ? '0' : '2818', 'num');
            else if (l === 'AB') html += cell(lows[row] || '2776,25', 'num');
            else html += cell();
        });
        html += '</tr>';
    }
    document.getElementById('sheet').innerHTML = html;
}

// bars older than the sheet: color, body top, body bottom, wick top, wick bottom (thirds of a pixel below 1820)
const older = `g 171 180 165 180,g 168 174 168 174,r 168 174 165 174,r 171 183 171 183,r 180 186 177 186,g 177 186 174 186,
g 168 180 168 180,r 168 204 168 204,g 186 204 183 210,r 186 195 186 201,r 192 198 192 198,r 195 216 189 216,g 213 216 201 225,
r 213 222 210 222,r 219 234 213 234,g 216 234 213 234,g 195 219 189 219,r 195 207 195 207,g 201 207 192 207,r 201 213 198 213,
g 207 213 201 213,g 204 210 204 216,g 201 207 195 207,g 201 204 198 207,g 201 204 192 216,r 198 225 198 225,r 222 243 222 246,
r 240 246 234 255,g 234 246 231 249,g 228 237 219 237,g 219 231 216 237,g 210 222 204 225,g 204 213 198 213,r 204 216 201 216,
r 213 222 201 222`.split(',').map(s => s.trim().split(' '));

function priceY(p) {
    return Math.round(1711.6 + (3200 - p) * 317 / 650);
}

function buildChart() {
    let s = '';
    const text = (x, y, t, w, fill, anchor) => {
        s += '<text x="' + x + '" y="' + y + '" font-size="11.3" xml:space="preserve"' + (w ? ' textLength="' + w + '"' : '') +
            (fill ? ' fill="' + fill + '"' : '') + (anchor ? ' text-anchor="' + anchor + '"' : '') + '>' + t + '</text>';
    };
    const rect = (x, y, w, h, fill) => {
        s += '<rect x="' + x + '" y="' + y + '" width="' + w + '" height="' + h + '" fill="' + fill + '"/>';
    };
    const candle = (x, color, top, bottom, high, low) => {
        rect(x, high, 1, low - high, '#fff');
        rect(x - 2, top, 5, Math.max(1, bottom - top), color);
    };

    older.forEach((b, i) => {
        const v = b.slice(1).map(n => 1820 + n / 3);
        candle(1883 - 7 * (110 - i), b[0] === 'g' ? '#00b000' : '#f00', v[0], v[1], v[2], v[3]);
    });
    bars.forEach((b, i) => {
        const v = b.slice(0, 4).map(n => parseFloat(n.replace(',', '.')));
        candle(1883 - 7 * i, v[3] >= v[0] ? '#00b000' : '#f00',
            priceY(Math.max(v[0], v[3])), priceY(Math.min(v[0], v[3])) + 1, priceY(v[1]), priceY(v[2]) + 1);
    });

    // opening range
    s += '<path d="M1365 1898.5H1884M1365 1903.5h10l6 4l12 9h8l3 2M1407 1918.5H1884" fill="none" stroke="#00ffff"/>';
    text(1889, 1902, 'OH', 18, '#35e0e0');
    text(1889, 1922, 'OL', 15, '#35e0e0');

    // header
    text(1112, 1685, 'ESH0-CME [CV][M]  5 Min   #6', 160);
    rect(1274, 1674, 55, 14, '#fff');
    text(1275, 1685, 'C: 2876.75', 53, '#000');
    text(1331, 1685, 'T: 1958', 36);
    rect(1369, 1674, 51, 14, '#00c800');
    text(1370, 1685, 'Chg: 6.50', 49, '#003c00');
    rect(1421, 1674, 65, 14, '#00c800');
    text(1422, 1685, 'DChg: 10.95', 63, '#003c00');
    s += '<svg x="1106" y="1673" width="991" height="20" viewBox="1106 1673 991 20">';
    text(1488, 1685, '2020-03-10 21:59:59 H: 2877.25 L: 2870.00 O: 2870.25 V: 4613 B: 2872.50 A: 2877.00 1x1 TR: 1s BV: 2212 AV: 2401 DV: 3294171', 636);
    s += '</svg>';

    // axes
    rect(2097, 1673, 1, 381, '#fff');
    rect(1107, 2053, 991, 1, '#fff');
    for (let p = 3200; p >= 2550; p -= 50) {
        rect(2098, priceY(p) - 1, 2, 1, '#fff');
        text(2102, priceY(p) + 3, p + '.00', 39);
    }
    rect(2101, 1862, 41, 15, '#fff');
    text(2102, 1873, '2876.75', 39, '#000');

    const times = ['13:10', '13:40', '14:10', '14:40', '15:10', '15:40', '16:10', '16:40', '17:10', '17:40', '18:10', '18:40',
        '19:10', '19:40', '20:10', '20:40', '21:10', '21:55', '22:25', '22:55', '23:25'];
    times.forEach((t, i) => {
        rect(1169 + 42 * i, 2054, 1, 3, '#fff');
        text(1169.5 + 42 * i, 2069, t, 27, '', 'middle');
    });
    rect(1113, 2054, 1, 3, '#fff');
    rect(2058, 2054, 1, 3, '#fff');
    rect(1107, 2057, 41, 15, '#fff');
    text(1108, 2069, '3-10 Tu', 39, '#000');
    rect(2036, 2057, 45, 15, '#fff');
    text(2037, 2069, '3-11 We', 43, '#000');
    rect(2133, 2057, 13, 15, '#00c800');
    text(2136.5, 2069, '6', 6);
    document.getElementById('chart').innerHTML = s;
}

function buildInputs() {
    const rows = [
        ['Start Time   (In:1)', '15:30:00'],
        ['End Time   (In:2)', '16:00:00'],
        ['Number Of Days To Calculate   (In:3)', '120'],
        ['Line Stop Time   (In:6)', '23:59:59'],
        ['Display High Low Incrementally   (In:7)', 'Yes'],
        ['Input Data High   (In:8)', 'High'],
        ['Input Data Low   (In:9)', 'Low'],
        ['Friday Evening Extends Into Sunday   (In:10)', 'No']
    ];
    while (rows.length < 21) rows.push(['', '']);
    document.getElementById('inputs').innerHTML = rows.map(r =>
        '<div class="input-row"><span>' + r[0] + '</span><span>' + r[1] + '</span></div>').join('');
}

buildSheet();
buildChart();
buildInputs();
```
